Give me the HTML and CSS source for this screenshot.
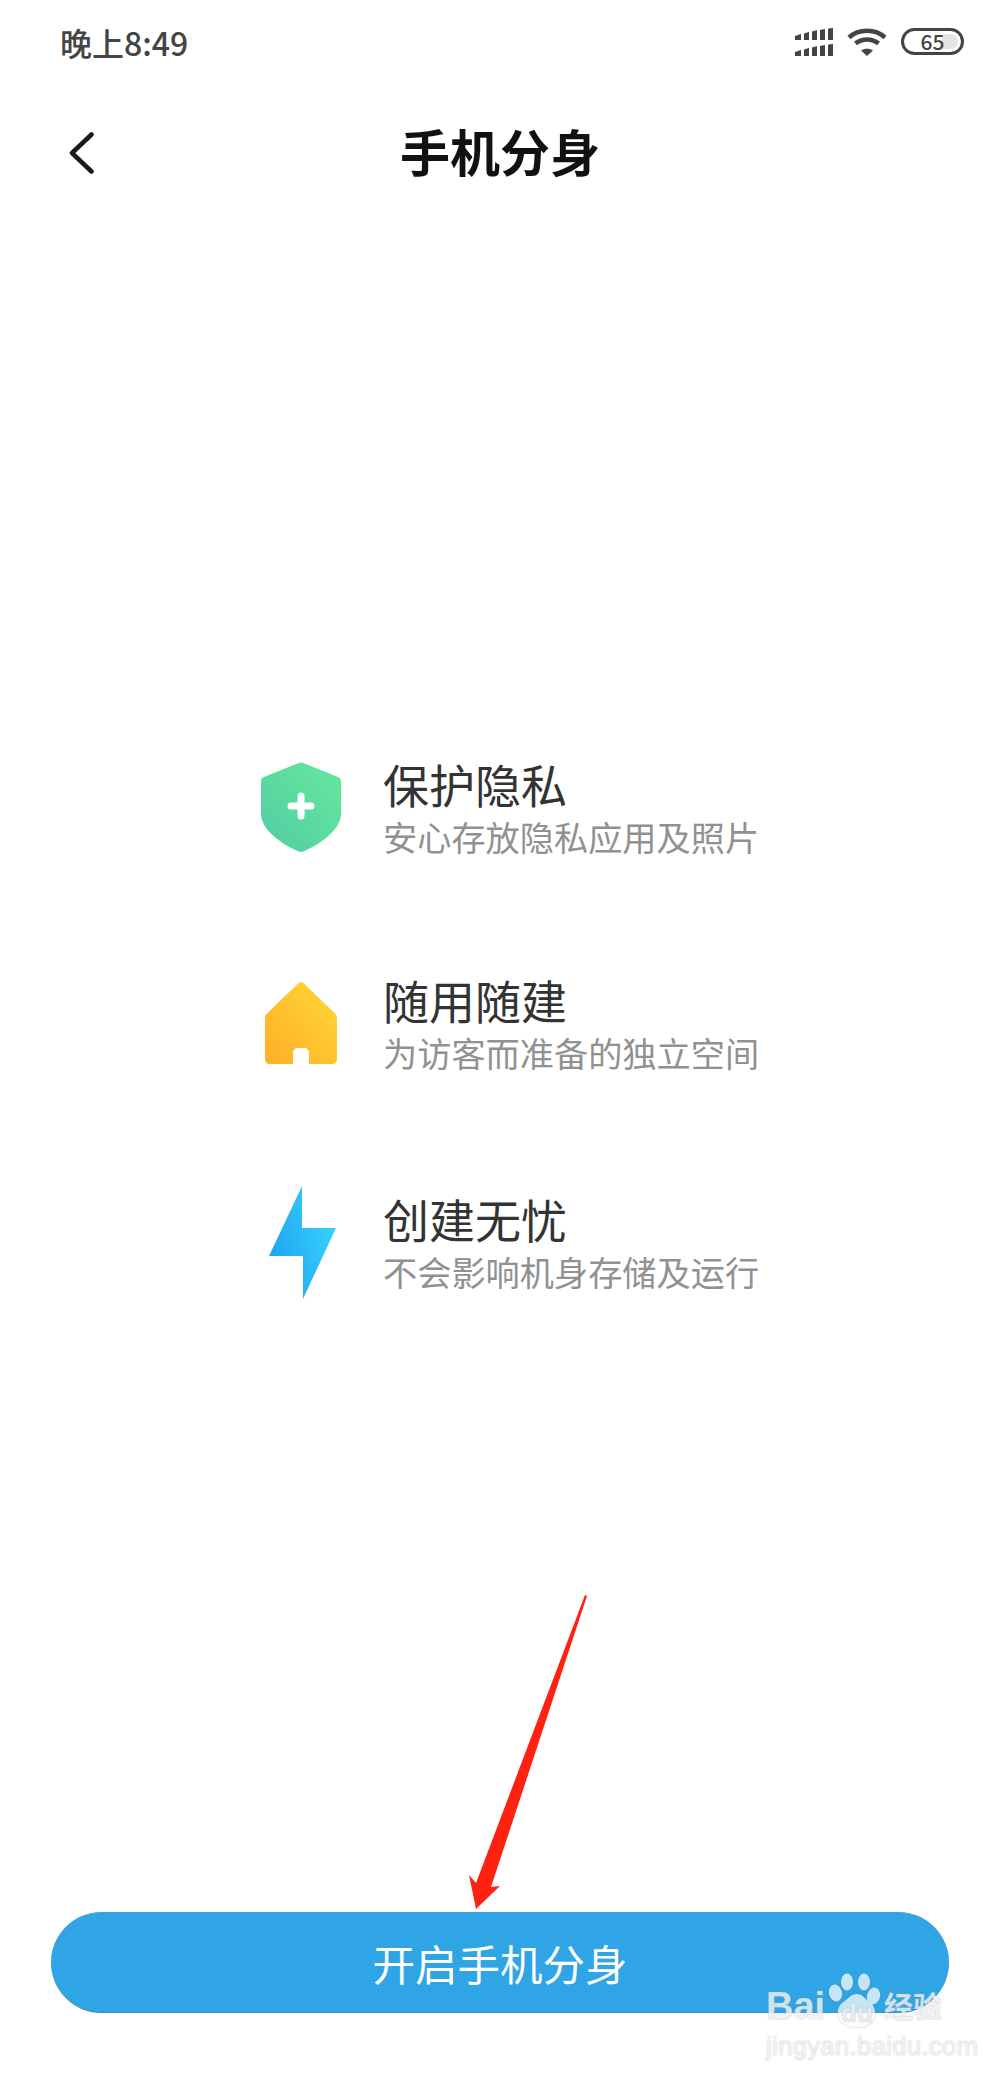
FILE: index.html
```html
<!doctype html>
<html>

<head>
  <meta charset="UTF-8">
  <meta name="viewport" content="width=device-width, initial-scale=1.0">
  <title>手机分身</title>
  <link rel="stylesheet" href="styles.css">
</head>

<body>
  <div class="page">
    <div class="status">
      <div class="time">晚上8:49</div>
      <div class="status-icons">
        <svg class="signal" width="38" height="29" viewBox="0 0 38 29">
          <g fill="#444">
            <path d="M0 8l6-2v6H0zM9 5.500l5-1.500v8H9zM17 3.500l5-1.500v10h-5zM25 2l5-1v11h-5zM33 .5L38 0v12h-5z"/>
            <path d="M0 24l6-2v6H0zM9 21.500l5-1.500v8H9zM17 19.500l5-1.500v10h-5zM25 18l5-1v11h-5zM33 16.500l5-.5v12h-5z"/>
          </g>
        </svg>
        <svg class="wifi" width="40" height="28" viewBox="0 0 40 28">
          <g fill="none" stroke="#444" stroke-width="4.500">
            <path d="M2 9.500C11.500 .5 28.500 .5 38 9.500"/>
            <path d="M8.500 15.500c6.500-5.500 16.500-5.500 23 0"/>
          </g>
          <path d="M20 28l-6-5.500c3.500-2.500 8.500-2.500 12 0z" fill="#444"/>
        </svg>
        <div class="battery">
          <div class="battery-fill"></div>
          <span class="battery-num">65</span>
        </div>
      </div>
    </div>

    <div class="topbar">
      <svg class="back" width="25" height="42" viewBox="0 0 25 42">
        <path d="M22.500 2.500L3 21l19.500 18.500" fill="none" stroke="#1a1a1a" stroke-width="4.500" stroke-linecap="round" stroke-linejoin="round"/>
      </svg>
      <h1 class="title">手机分身</h1>
    </div>

    <div class="features">
      <div class="feature">
        <div class="feature-icon">
          <svg width="80" height="90" viewBox="0 0 80 90">
            <defs>
              <linearGradient id="shieldGrad" x1="1" y1="0" x2="0" y2="1">
                <stop offset="0" stop-color="#66e89c"/>
                <stop offset="1" stop-color="#50cda5"/>
              </linearGradient>
            </defs>
            <path d="M37 1.200c2-.8 4-.8 6 0L77 15c2 .8 3 2 3 4v33c0 16-22 31-38 37.500-1.300.6-2.700.6-4 0C22 83 0 68 0 52V19c0-2 1-3.200 3-4z" fill="url(#shieldGrad)"/>
            <path d="M40 34v20M30 44h20" stroke="#fff" stroke-width="7" stroke-linecap="round"/>
          </svg>
        </div>
        <div class="feature-text">
          <div class="feature-name">保护隐私</div>
          <div class="feature-desc">安心存放隐私应用及照片</div>
        </div>
      </div>

      <div class="feature">
        <div class="feature-icon">
          <svg width="72" height="82" viewBox="0 0 72 82">
            <defs>
              <linearGradient id="houseGrad" x1="1" y1="0" x2="0" y2="1">
                <stop offset="0" stop-color="#ffd936"/>
                <stop offset="1" stop-color="#ffae28"/>
              </linearGradient>
            </defs>
            <path d="M33 1.500c2-2 4-2 6 0l31 30c1.500 1.500 2 2.500 2 4.500v41c0 3-2 5-5 5H44V71c0-3-2-5-5-5h-6c-3 0-5 2-5 5v11H5c-3 0-5-2-5-5V36c0-2 .5-3 2-4.500z" fill="url(#houseGrad)"/>
          </svg>
        </div>
        <div class="feature-text">
          <div class="feature-name">随用随建</div>
          <div class="feature-desc">为访客而准备的独立空间</div>
        </div>
      </div>

      <div class="feature">
        <div class="feature-icon">
          <svg width="69" height="113" viewBox="-2 0 69 113">
            <defs>
              <linearGradient id="boltGrad" x1="1" y1="0.300" x2="0" y2="0.800">
                <stop offset="0" stop-color="#38d4fc"/>
                <stop offset="1" stop-color="#1d9ff0"/>
              </linearGradient>
            </defs>
            <path d="M33 0v42h34L34 113V70H0z" fill="url(#boltGrad)"/>
          </svg>
        </div>
        <div class="feature-text">
          <div class="feature-name">创建无忧</div>
          <div class="feature-desc">不会影响机身存储及运行</div>
        </div>
      </div>
    </div>

    <div class="footer">
      <button class="start-btn">开启手机分身</button>
    </div>

    <svg class="arrow" width="130" height="320" viewBox="0 0 130 320">
      <path d="M123 0L125 1 29 292 38 291 14 314 7 280 14 288z" fill="#ff2211"/>
    </svg>

    <div class="watermark">
      <div class="wm-logo">
        <span class="wm-bai">Bai</span>
        <div class="wm-paw">
          <svg width="52" height="54" viewBox="0 0 52 54">
            <g fill="#fff">
              <ellipse cx="6.500" cy="20" rx="6.500" ry="8.500" transform="rotate(-15 6.500 20)"/>
              <ellipse cx="18" cy="9" rx="6" ry="8.500"/>
              <ellipse cx="35" cy="9" rx="6" ry="8.500"/>
              <ellipse cx="44.500" cy="23" rx="6.500" ry="8.500" transform="rotate(15 44.500 23)"/>
              <path d="M28 21c5 0 8 5 14 9 6 5 8 24-14 24S6 36 13 30c6-4 9-9 15-9z"/>
            </g>
          </svg>
          <span class="wm-du">du</span>
        </div>
        <span class="wm-cn">经验</span>
      </div>
      <div class="wm-url">jingyan.baidu.com</div>
    </div>
  </div>
</body>

</html>
```

FILE: styles.css
```css
* {
  margin: 0;
  padding: 0;
  box-sizing: border-box;
}

body {
  margin: 0;
  padding: 0;
  background: #fff;
  font-family: "Noto Sans CJK SC", "Noto Sans", sans-serif;
}

.page {
  position: relative;
  width: 1000px;
  height: 2078px;
  overflow: hidden;
  display: flex;
  flex-direction: column;
}

.status {
  height: 85px;
  padding: 19px 36px 0 60px;
  display: flex;
  justify-content: space-between;
  align-items: flex-start;
}

.time {
  font-size: 32px;
  line-height: 46px;
  font-weight: 500;
  color: #444;
}

.status-icons {
  display: flex;
  align-items: flex-start;
  padding-top: 9px;
}

.wifi {
  margin-left: 14px;
}

.battery {
  position: relative;
  margin-left: 14px;
  width: 63px;
  height: 27px;
  border: 3px solid #444;
  border-radius: 14px;
  padding: 3px;
  display: flex;
}

.battery-fill {
  width: 100%;
  background: linear-gradient(to right, #fff 68%, #e4e4e4 68%);
  border-radius: 8px;
}

.battery-num {
  position: absolute;
  left: 0;
  right: 0;
  top: 0;
  text-align: center;
  font-size: 21px;
  line-height: 21px;
  font-weight: 500;
  color: #444;
}

.topbar {
  position: relative;
  height: 110px;
  padding-top: 20px;
  display: flex;
  justify-content: center;
  align-items: center;
}

.back {
  position: absolute;
  left: 69px;
  top: 47px;
}

.title {
  font-size: 50px;
  line-height: 60px;
  font-weight: 700;
  color: #111;
}

.features {
  margin-top: 557px;
  padding-left: 258px;
  display: flex;
  flex-direction: column;
}

.feature {
  display: flex;
  align-items: center;
  height: 110px;
  margin-bottom: 109px;
}

.feature:first-child {
  margin-bottom: 106px;
}

.feature-icon {
  width: 86px;
  margin-right: 39px;
  display: flex;
  justify-content: center;
}

.feature-name {
  font-size: 46px;
  line-height: 58px;
  color: #333;
}

.feature-desc {
  font-size: 34.2px;
  line-height: 49px;
  color: #919191;
}

.footer {
  position: absolute;
  left: 51px;
  right: 51px;
  bottom: 65px;
}

.start-btn {
  display: block;
  width: 100%;
  height: 101px;
  border: none;
  border-top: 1px solid #47a3d8;
  border-bottom: 1px solid #3c8fc2;
  border-radius: 51px;
  background: #2fa5e5;
  color: #fff;
  font-family: inherit;
  font-size: 42.5px;
}

.arrow {
  position: absolute;
  left: 462px;
  top: 1595px;
}

.watermark {
  position: absolute;
  left: 766px;
  top: 1973px;
  width: 184px;
  color: rgba(250, 250, 250, .75);
  -webkit-text-stroke: .4px rgba(190, 190, 190, .45);
  text-shadow: 0 0 2px rgba(150, 150, 150, .35);
}

.wm-logo {
  display: flex;
  align-items: flex-end;
  height: 54px;
}

.wm-bai {
  width: 63px;
  font-family: "Liberation Sans", sans-serif;
  font-size: 38px;
  line-height: 42px;
  font-weight: 700;
}

.wm-paw {
  position: relative;
  width: 52px;
  height: 54px;
}

.wm-paw svg {
  display: block;
  opacity: .72;
  filter: drop-shadow(0 0 1px rgba(120, 120, 120, .6));
}

.wm-du {
  position: absolute;
  left: 12px;
  top: 27px;
  font-family: "Liberation Sans", sans-serif;
  font-size: 26px;
  line-height: 26px;
  font-weight: 700;
  color: #e4eef4;
}

.wm-cn {
  margin-left: 3px;
  font-size: 29px;
  line-height: 44px;
  font-weight: 700;
}

.wm-url {
  margin-top: 6px;
  font-family: "Liberation Sans", sans-serif;
  font-size: 25.5px;
  line-height: 26px;
  letter-spacing: .4px;
}
```
